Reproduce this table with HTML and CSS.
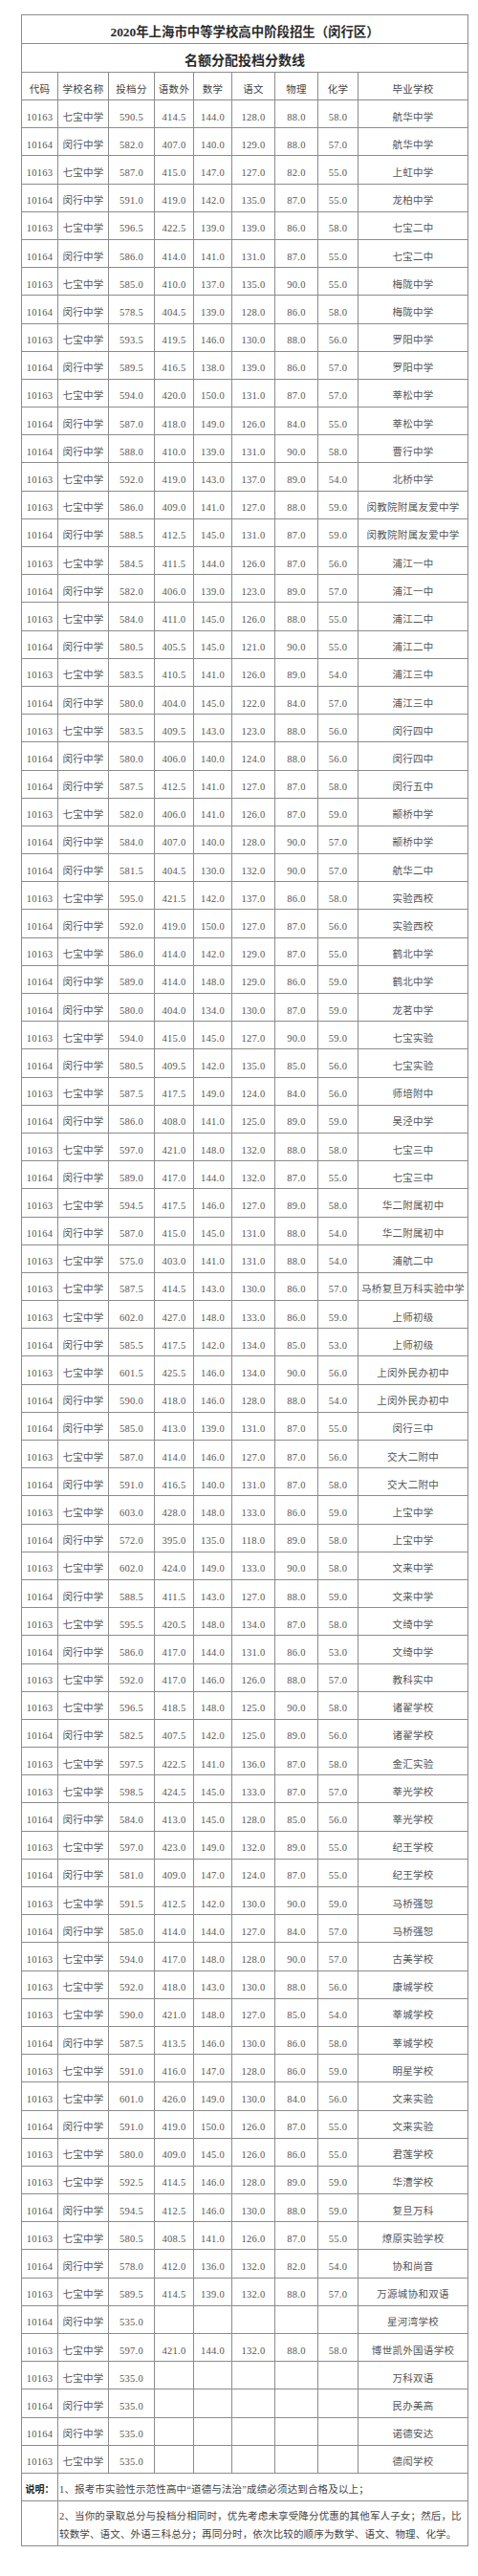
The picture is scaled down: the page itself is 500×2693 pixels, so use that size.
FILE: index.html
```html
<!DOCTYPE html>
<html lang="zh-CN">
<head>
<meta charset="utf-8">
<title>2020年上海市中等学校高中阶段招生（闵行区）名额分配投档分数线</title>
<link rel="stylesheet" href="styles.css">
</head>
<body>
<div class="page">
<table class="score">
<colgroup>
<col class="c-code"><col class="c-school"><col class="c-total"><col class="c-three"><col class="c-math"><col class="c-chn"><col class="c-phy"><col class="c-chem"><col class="c-grad">
</colgroup>
<tbody>
<tr class="title"><td colspan="9">2020年上海市中等学校高中阶段招生（闵行区）</td></tr>
<tr class="subtitle"><td colspan="9">名额分配投档分数线</td></tr>
<tr class="head"><td>代码</td><td>学校名称</td><td>投档分</td><td>语数外</td><td>数学</td><td>语文</td><td>物理</td><td>化学</td><td>毕业学校</td></tr>
<tr><td>10163</td><td>七宝中学</td><td>590.5</td><td>414.5</td><td>144.0</td><td>128.0</td><td>88.0</td><td>58.0</td><td>航华中学</td></tr>
<tr><td>10164</td><td>闵行中学</td><td>582.0</td><td>407.0</td><td>140.0</td><td>129.0</td><td>88.0</td><td>57.0</td><td>航华中学</td></tr>
<tr><td>10163</td><td>七宝中学</td><td>587.0</td><td>415.0</td><td>147.0</td><td>127.0</td><td>82.0</td><td>55.0</td><td>上虹中学</td></tr>
<tr><td>10164</td><td>闵行中学</td><td>591.0</td><td>419.0</td><td>142.0</td><td>135.0</td><td>87.0</td><td>55.0</td><td>龙柏中学</td></tr>
<tr><td>10163</td><td>七宝中学</td><td>596.5</td><td>422.5</td><td>139.0</td><td>139.0</td><td>86.0</td><td>58.0</td><td>七宝二中</td></tr>
<tr><td>10164</td><td>闵行中学</td><td>586.0</td><td>414.0</td><td>141.0</td><td>131.0</td><td>87.0</td><td>55.0</td><td>七宝二中</td></tr>
<tr><td>10163</td><td>七宝中学</td><td>585.0</td><td>410.0</td><td>137.0</td><td>135.0</td><td>90.0</td><td>55.0</td><td>梅陇中学</td></tr>
<tr><td>10164</td><td>闵行中学</td><td>578.5</td><td>404.5</td><td>139.0</td><td>128.0</td><td>86.0</td><td>58.0</td><td>梅陇中学</td></tr>
<tr><td>10163</td><td>七宝中学</td><td>593.5</td><td>419.5</td><td>146.0</td><td>130.0</td><td>88.0</td><td>56.0</td><td>罗阳中学</td></tr>
<tr><td>10164</td><td>闵行中学</td><td>589.5</td><td>416.5</td><td>138.0</td><td>139.0</td><td>86.0</td><td>57.0</td><td>罗阳中学</td></tr>
<tr><td>10163</td><td>七宝中学</td><td>594.0</td><td>420.0</td><td>150.0</td><td>131.0</td><td>87.0</td><td>57.0</td><td>莘松中学</td></tr>
<tr><td>10164</td><td>闵行中学</td><td>587.0</td><td>418.0</td><td>149.0</td><td>126.0</td><td>84.0</td><td>55.0</td><td>莘松中学</td></tr>
<tr><td>10164</td><td>闵行中学</td><td>588.0</td><td>410.0</td><td>139.0</td><td>131.0</td><td>90.0</td><td>58.0</td><td>曹行中学</td></tr>
<tr><td>10163</td><td>七宝中学</td><td>592.0</td><td>419.0</td><td>143.0</td><td>137.0</td><td>89.0</td><td>54.0</td><td>北桥中学</td></tr>
<tr><td>10163</td><td>七宝中学</td><td>586.0</td><td>409.0</td><td>141.0</td><td>127.0</td><td>88.0</td><td>59.0</td><td>闵教院附属友爱中学</td></tr>
<tr><td>10164</td><td>闵行中学</td><td>588.5</td><td>412.5</td><td>145.0</td><td>131.0</td><td>87.0</td><td>59.0</td><td>闵教院附属友爱中学</td></tr>
<tr><td>10163</td><td>七宝中学</td><td>584.5</td><td>411.5</td><td>144.0</td><td>126.0</td><td>87.0</td><td>56.0</td><td>浦江一中</td></tr>
<tr><td>10164</td><td>闵行中学</td><td>582.0</td><td>406.0</td><td>139.0</td><td>123.0</td><td>89.0</td><td>57.0</td><td>浦江一中</td></tr>
<tr><td>10163</td><td>七宝中学</td><td>584.0</td><td>411.0</td><td>145.0</td><td>126.0</td><td>88.0</td><td>55.0</td><td>浦江二中</td></tr>
<tr><td>10164</td><td>闵行中学</td><td>580.5</td><td>405.5</td><td>145.0</td><td>121.0</td><td>90.0</td><td>55.0</td><td>浦江二中</td></tr>
<tr><td>10163</td><td>七宝中学</td><td>583.5</td><td>410.5</td><td>141.0</td><td>126.0</td><td>89.0</td><td>54.0</td><td>浦江三中</td></tr>
<tr><td>10164</td><td>闵行中学</td><td>580.0</td><td>404.0</td><td>145.0</td><td>122.0</td><td>84.0</td><td>57.0</td><td>浦江三中</td></tr>
<tr><td>10163</td><td>七宝中学</td><td>583.5</td><td>409.5</td><td>143.0</td><td>123.0</td><td>88.0</td><td>56.0</td><td>闵行四中</td></tr>
<tr><td>10164</td><td>闵行中学</td><td>580.0</td><td>406.0</td><td>140.0</td><td>124.0</td><td>88.0</td><td>56.0</td><td>闵行四中</td></tr>
<tr><td>10164</td><td>闵行中学</td><td>587.5</td><td>412.5</td><td>141.0</td><td>127.0</td><td>87.0</td><td>58.0</td><td>闵行五中</td></tr>
<tr><td>10163</td><td>七宝中学</td><td>582.0</td><td>406.0</td><td>141.0</td><td>126.0</td><td>87.0</td><td>59.0</td><td>颛桥中学</td></tr>
<tr><td>10164</td><td>闵行中学</td><td>584.0</td><td>407.0</td><td>140.0</td><td>128.0</td><td>90.0</td><td>57.0</td><td>颛桥中学</td></tr>
<tr><td>10164</td><td>闵行中学</td><td>581.5</td><td>404.5</td><td>130.0</td><td>132.0</td><td>90.0</td><td>57.0</td><td>航华二中</td></tr>
<tr><td>10163</td><td>七宝中学</td><td>595.0</td><td>421.5</td><td>142.0</td><td>137.0</td><td>86.0</td><td>58.0</td><td>实验西校</td></tr>
<tr><td>10164</td><td>闵行中学</td><td>592.0</td><td>419.0</td><td>150.0</td><td>127.0</td><td>87.0</td><td>56.0</td><td>实验西校</td></tr>
<tr><td>10163</td><td>七宝中学</td><td>586.0</td><td>414.0</td><td>142.0</td><td>129.0</td><td>87.0</td><td>55.0</td><td>鹤北中学</td></tr>
<tr><td>10164</td><td>闵行中学</td><td>589.0</td><td>414.0</td><td>148.0</td><td>129.0</td><td>86.0</td><td>59.0</td><td>鹤北中学</td></tr>
<tr><td>10164</td><td>闵行中学</td><td>580.0</td><td>404.0</td><td>134.0</td><td>130.0</td><td>87.0</td><td>59.0</td><td>龙茗中学</td></tr>
<tr><td>10163</td><td>七宝中学</td><td>594.0</td><td>415.0</td><td>145.0</td><td>127.0</td><td>90.0</td><td>59.0</td><td>七宝实验</td></tr>
<tr><td>10164</td><td>闵行中学</td><td>580.5</td><td>409.5</td><td>142.0</td><td>135.0</td><td>85.0</td><td>56.0</td><td>七宝实验</td></tr>
<tr><td>10163</td><td>七宝中学</td><td>587.5</td><td>417.5</td><td>149.0</td><td>124.0</td><td>84.0</td><td>56.0</td><td>师培附中</td></tr>
<tr><td>10164</td><td>闵行中学</td><td>586.0</td><td>408.0</td><td>141.0</td><td>125.0</td><td>89.0</td><td>59.0</td><td>吴泾中学</td></tr>
<tr><td>10163</td><td>七宝中学</td><td>597.0</td><td>421.0</td><td>148.0</td><td>132.0</td><td>88.0</td><td>58.0</td><td>七宝三中</td></tr>
<tr><td>10164</td><td>闵行中学</td><td>589.0</td><td>417.0</td><td>144.0</td><td>132.0</td><td>87.0</td><td>55.0</td><td>七宝三中</td></tr>
<tr><td>10163</td><td>七宝中学</td><td>594.5</td><td>417.5</td><td>146.0</td><td>127.0</td><td>89.0</td><td>58.0</td><td>华二附属初中</td></tr>
<tr><td>10164</td><td>闵行中学</td><td>587.0</td><td>415.0</td><td>145.0</td><td>131.0</td><td>88.0</td><td>54.0</td><td>华二附属初中</td></tr>
<tr><td>10163</td><td>七宝中学</td><td>575.0</td><td>403.0</td><td>141.0</td><td>131.0</td><td>88.0</td><td>54.0</td><td>浦航二中</td></tr>
<tr><td>10163</td><td>七宝中学</td><td>587.5</td><td>414.5</td><td>143.0</td><td>130.0</td><td>86.0</td><td>57.0</td><td>马桥复旦万科实验中学</td></tr>
<tr><td>10163</td><td>七宝中学</td><td>602.0</td><td>427.0</td><td>148.0</td><td>133.0</td><td>86.0</td><td>59.0</td><td>上师初级</td></tr>
<tr><td>10164</td><td>闵行中学</td><td>585.5</td><td>417.5</td><td>142.0</td><td>134.0</td><td>85.0</td><td>53.0</td><td>上师初级</td></tr>
<tr><td>10163</td><td>七宝中学</td><td>601.5</td><td>425.5</td><td>146.0</td><td>134.0</td><td>90.0</td><td>56.0</td><td>上闵外民办初中</td></tr>
<tr><td>10164</td><td>闵行中学</td><td>590.0</td><td>418.0</td><td>146.0</td><td>128.0</td><td>88.0</td><td>54.0</td><td>上闵外民办初中</td></tr>
<tr><td>10164</td><td>闵行中学</td><td>585.0</td><td>413.0</td><td>139.0</td><td>131.0</td><td>87.0</td><td>55.0</td><td>闵行三中</td></tr>
<tr><td>10163</td><td>七宝中学</td><td>587.0</td><td>414.0</td><td>146.0</td><td>127.0</td><td>87.0</td><td>56.0</td><td>交大二附中</td></tr>
<tr><td>10164</td><td>闵行中学</td><td>591.0</td><td>416.5</td><td>140.0</td><td>131.0</td><td>87.0</td><td>58.0</td><td>交大二附中</td></tr>
<tr><td>10163</td><td>七宝中学</td><td>603.0</td><td>428.0</td><td>148.0</td><td>133.0</td><td>86.0</td><td>59.0</td><td>上宝中学</td></tr>
<tr><td>10164</td><td>闵行中学</td><td>572.0</td><td>395.0</td><td>135.0</td><td>118.0</td><td>89.0</td><td>58.0</td><td>上宝中学</td></tr>
<tr><td>10163</td><td>七宝中学</td><td>602.0</td><td>424.0</td><td>149.0</td><td>133.0</td><td>90.0</td><td>58.0</td><td>文来中学</td></tr>
<tr><td>10164</td><td>闵行中学</td><td>588.5</td><td>411.5</td><td>143.0</td><td>127.0</td><td>88.0</td><td>59.0</td><td>文来中学</td></tr>
<tr><td>10163</td><td>七宝中学</td><td>595.5</td><td>420.5</td><td>148.0</td><td>134.0</td><td>87.0</td><td>58.0</td><td>文绮中学</td></tr>
<tr><td>10164</td><td>闵行中学</td><td>586.0</td><td>417.0</td><td>144.0</td><td>131.0</td><td>86.0</td><td>53.0</td><td>文绮中学</td></tr>
<tr><td>10163</td><td>七宝中学</td><td>592.0</td><td>417.0</td><td>146.0</td><td>126.0</td><td>88.0</td><td>57.0</td><td>教科实中</td></tr>
<tr><td>10163</td><td>七宝中学</td><td>596.5</td><td>418.5</td><td>148.0</td><td>125.0</td><td>90.0</td><td>58.0</td><td>诸翟学校</td></tr>
<tr><td>10164</td><td>闵行中学</td><td>582.5</td><td>407.5</td><td>142.0</td><td>125.0</td><td>89.0</td><td>56.0</td><td>诸翟学校</td></tr>
<tr><td>10163</td><td>七宝中学</td><td>597.5</td><td>422.5</td><td>141.0</td><td>136.0</td><td>87.0</td><td>58.0</td><td>金汇实验</td></tr>
<tr><td>10163</td><td>七宝中学</td><td>598.5</td><td>424.5</td><td>145.0</td><td>133.0</td><td>87.0</td><td>57.0</td><td>莘光学校</td></tr>
<tr><td>10164</td><td>闵行中学</td><td>584.0</td><td>413.0</td><td>145.0</td><td>128.0</td><td>85.0</td><td>56.0</td><td>莘光学校</td></tr>
<tr><td>10163</td><td>七宝中学</td><td>597.0</td><td>423.0</td><td>149.0</td><td>132.0</td><td>89.0</td><td>55.0</td><td>纪王学校</td></tr>
<tr><td>10164</td><td>闵行中学</td><td>581.0</td><td>409.0</td><td>147.0</td><td>124.0</td><td>87.0</td><td>55.0</td><td>纪王学校</td></tr>
<tr><td>10163</td><td>七宝中学</td><td>591.5</td><td>412.5</td><td>142.0</td><td>130.0</td><td>90.0</td><td>59.0</td><td>马桥强恕</td></tr>
<tr><td>10164</td><td>闵行中学</td><td>585.0</td><td>414.0</td><td>144.0</td><td>127.0</td><td>84.0</td><td>57.0</td><td>马桥强恕</td></tr>
<tr><td>10163</td><td>七宝中学</td><td>594.0</td><td>417.0</td><td>148.0</td><td>128.0</td><td>90.0</td><td>57.0</td><td>古美学校</td></tr>
<tr><td>10163</td><td>七宝中学</td><td>592.0</td><td>418.0</td><td>143.0</td><td>130.0</td><td>88.0</td><td>56.0</td><td>康城学校</td></tr>
<tr><td>10163</td><td>七宝中学</td><td>590.0</td><td>421.0</td><td>148.0</td><td>127.0</td><td>85.0</td><td>54.0</td><td>莘城学校</td></tr>
<tr><td>10164</td><td>闵行中学</td><td>587.5</td><td>413.5</td><td>146.0</td><td>130.0</td><td>86.0</td><td>58.0</td><td>莘城学校</td></tr>
<tr><td>10163</td><td>七宝中学</td><td>591.0</td><td>416.0</td><td>147.0</td><td>128.0</td><td>86.0</td><td>59.0</td><td>明星学校</td></tr>
<tr><td>10163</td><td>七宝中学</td><td>601.0</td><td>426.0</td><td>149.0</td><td>130.0</td><td>84.0</td><td>56.0</td><td>文来实验</td></tr>
<tr><td>10164</td><td>闵行中学</td><td>591.0</td><td>419.0</td><td>150.0</td><td>126.0</td><td>87.0</td><td>55.0</td><td>文来实验</td></tr>
<tr><td>10163</td><td>七宝中学</td><td>580.0</td><td>409.0</td><td>145.0</td><td>126.0</td><td>86.0</td><td>55.0</td><td>君莲学校</td></tr>
<tr><td>10163</td><td>七宝中学</td><td>592.5</td><td>414.5</td><td>146.0</td><td>128.0</td><td>89.0</td><td>59.0</td><td>华漕学校</td></tr>
<tr><td>10164</td><td>闵行中学</td><td>594.5</td><td>412.5</td><td>146.0</td><td>130.0</td><td>88.0</td><td>59.0</td><td>复旦万科</td></tr>
<tr><td>10163</td><td>七宝中学</td><td>580.5</td><td>408.5</td><td>141.0</td><td>126.0</td><td>87.0</td><td>55.0</td><td>燎原实验学校</td></tr>
<tr><td>10164</td><td>闵行中学</td><td>578.0</td><td>412.0</td><td>136.0</td><td>132.0</td><td>82.0</td><td>54.0</td><td>协和尚音</td></tr>
<tr><td>10163</td><td>七宝中学</td><td>589.5</td><td>414.5</td><td>139.0</td><td>132.0</td><td>88.0</td><td>57.0</td><td>万源城协和双语</td></tr>
<tr><td>10164</td><td>闵行中学</td><td>535.0</td><td></td><td></td><td></td><td></td><td></td><td>星河湾学校</td></tr>
<tr><td>10163</td><td>七宝中学</td><td>597.0</td><td>421.0</td><td>144.0</td><td>132.0</td><td>88.0</td><td>58.0</td><td>博世凯外国语学校</td></tr>
<tr><td>10163</td><td>七宝中学</td><td>535.0</td><td></td><td></td><td></td><td></td><td></td><td>万科双语</td></tr>
<tr><td>10164</td><td>闵行中学</td><td>535.0</td><td></td><td></td><td></td><td></td><td></td><td>民办美高</td></tr>
<tr><td>10164</td><td>闵行中学</td><td>535.0</td><td></td><td></td><td></td><td></td><td></td><td>诺德安达</td></tr>
<tr><td>10163</td><td>七宝中学</td><td>535.0</td><td></td><td></td><td></td><td></td><td></td><td>德闳学校</td></tr>
<tr class="note"><td class="note-label">说明：</td><td colspan="8" class="note-text">1、报考市实验性示范性高中“道德与法治”成绩必须达到合格及以上；</td></tr>
<tr class="note note-long"><td></td><td colspan="8" class="note-text">2、当你的录取总分与投档分相同时，优先考虑未享受降分优惠的其他军人子女；然后，比较数学、语文、外语三科总分；再同分时，依次比较的顺序为数学、语文、物理、化学。</td></tr>
</tbody>
</table>
</div>
</body>
</html>
```
FILE: styles.css
```css
html, body {
  margin: 0;
  padding: 0;
  background: #ffffff;
}

.page {
  padding: 15px 0 0 22px;
  width: 478px;
  height: 2678px;
}

.score {
  border-collapse: collapse;
  table-layout: fixed;
  width: 468px;
  font-family: "Liberation Serif", "Noto Sans CJK SC", serif;
  font-size: 10.5px;
  color: #555555;
}

.c-code { width: 38px; }
.c-school { width: 53px; }
.c-total { width: 48px; }
.c-three { width: 41px; }
.c-math { width: 40px; }
.c-chn { width: 45px; }
.c-phy { width: 45px; }
.c-chem { width: 42px; }
.c-grad { width: 115px; }

.score td {
  border: 1px solid #8c8c8c;
  height: 29.2px;
  box-sizing: border-box;
  padding: 7px 0 0;
  text-align: center;
  vertical-align: middle;
  white-space: nowrap;
  line-height: 14px;
  letter-spacing: 0.3px;
}

.score .title td {
  height: 30px;
  padding-top: 6px;
  font-size: 13.4px;
  font-weight: bold;
  color: #2a2a2a;
  letter-spacing: 0;
}

.score .subtitle td {
  height: 30px;
  padding-top: 6px;
  font-size: 14px;
  font-weight: bold;
  color: #2a2a2a;
  letter-spacing: 0;
}

.score .head td {
  height: 29px;
  color: #444444;
}

.score .note td {
  height: 29px;
}

.score .note-label {
  font-weight: bold;
  font-size: 10px;
  color: #222222;
  letter-spacing: 0;
}

.score .note-text {
  text-align: left;
  padding-left: 1px;
  color: #444444;
  letter-spacing: 0.15px;
}

.score .note-long td {
  height: 47px;
  padding-top: 5px;
}

.score .note-long .note-text {
  white-space: normal;
  line-height: 19px;
}
```
